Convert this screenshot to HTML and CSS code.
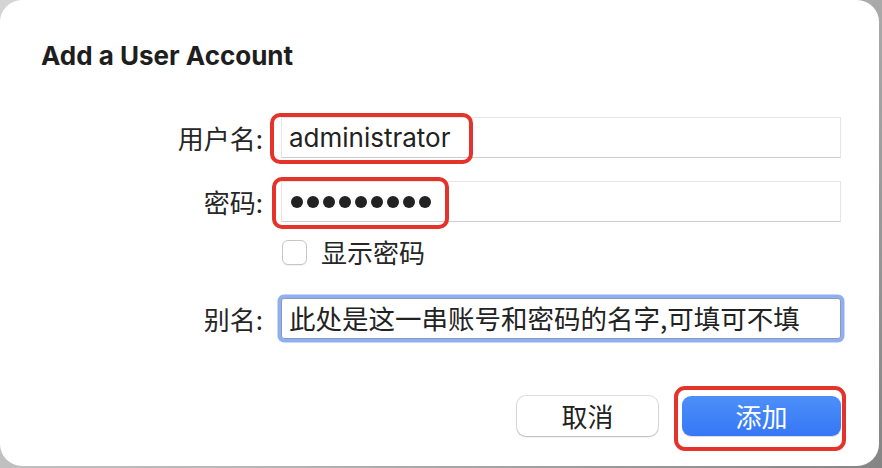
FILE: index.html
```html
<!DOCTYPE html>
<html lang="zh-CN">
<head>
<meta charset="utf-8">
<title>Add a User Account</title>
<link rel="stylesheet" href="styles.css">
</head>
<body>
<div class="dialog">
  <h1 class="title">Add a User Account</h1>
  <div class="form">
    <div class="row row-user">
      <label class="label">用户名:</label>
      <div class="field">
        <span class="value">administrator</span>
        <span class="mark mark-user"></span>
      </div>
    </div>
    <div class="row row-pass">
      <label class="label">密码:</label>
      <div class="field">
        <span class="dots"><i></i><i></i><i></i><i></i><i></i><i></i><i></i><i></i><i></i></span>
        <span class="mark mark-pass"></span>
      </div>
    </div>
    <div class="row row-check">
      <span class="label"></span>
      <div class="check">
        <span class="box"></span>
        <span class="check-text">显示密码</span>
      </div>
    </div>
    <div class="row row-alias">
      <label class="label">别名:</label>
      <div class="field focused">
        <span class="value">此处是这一串账号和密码的名字,可填可不填</span>
      </div>
    </div>
  </div>
  <div class="actions">
    <button class="btn btn-cancel">取消</button>
    <div class="btn-wrap">
      <button class="btn btn-primary">添加</button>
      <span class="mark mark-btn"></span>
    </div>
  </div>
</div>
</body>
</html>
```
FILE: styles.css
```css
html, body {
  margin: 0;
  padding: 0;
}
body {
  width: 882px;
  height: 468px;
  overflow: hidden;
  background: linear-gradient(135deg, #d4d4d4 0%, #b4b4b4 55%, #858585 100%);
  font-family: "Inter", "Noto Sans CJK SC", sans-serif;
  color: #232323;
}
.dialog {
  width: 879px;
  height: 466px;
  box-sizing: border-box;
  background: #fff;
  border-radius: 22px;
  padding: 40px 38px 0 41px;
}
.title {
  margin: 0;
  font-size: 26px;
  line-height: 32px;
  font-weight: 700;
  letter-spacing: 0;
  color: #1e1e1e;
}
.form {
  margin-top: 45px;
  display: flex;
  flex-direction: column;
}
.row {
  display: flex;
  align-items: center;
}
.label {
  width: 222px;
  flex: none;
  text-align: right;
  font-family: "Noto Sans CJK SC", sans-serif;
  font-size: 26px;
  line-height: 41px;
  margin-right: 18px;
  color: #262626;
}
.field {
  position: relative;
  width: 560px;
  height: 41px;
  box-sizing: border-box;
  border: 1px solid #e6e6e6;
  border-bottom-color: #cdcdcd;
  display: flex;
  align-items: center;
  padding-left: 7px;
  background: #fff;
}
.value {
  font-size: 26px;
  line-height: 1;
  color: #222;
  white-space: nowrap;
}
.row-alias .value {
  font-family: "Noto Sans CJK SC", sans-serif;
  font-size: 26.5px;
}
.row-pass {
  margin-top: 23px;
}
.row-check {
  margin-top: 16px;
  height: 28px;
}
.row-check .label {
  line-height: 28px;
}
.row-alias {
  margin-top: 32px;
}
.focused {
  border: 1px solid #8e9ab3;
  box-shadow: 0 0 0 3.5px #8eb0f3;
  border-radius: 3px;
}
.dots {
  display: flex;
  gap: 4px;
  padding-left: 2px;
}
.dots i {
  display: block;
  width: 12px;
  height: 12px;
  border-radius: 50%;
  background: #222;
}
.check {
  display: flex;
  align-items: center;
  gap: 14px;
}
.box {
  display: block;
  width: 25px;
  height: 25px;
  box-sizing: border-box;
  border: 1px solid #c6c6c6;
  border-radius: 6px;
  background: #fff;
  box-shadow: 0 1px 1px rgba(0,0,0,0.06);
  margin-left: 1px;
}
.check-text {
  font-family: "Noto Sans CJK SC", sans-serif;
  font-size: 26px;
  line-height: 28px;
  color: #262626;
}
.mark {
  position: absolute;
  box-sizing: border-box;
  border: 4px solid #e4332b;
  border-radius: 10px;
  pointer-events: none;
}
.mark-user {
  left: -12px;
  top: -5px;
  width: 203px;
  height: 51px;
}
.mark-pass {
  left: -10px;
  top: -5px;
  width: 177px;
  height: 52px;
}
.actions {
  display: flex;
  justify-content: flex-end;
  align-items: center;
  gap: 24px;
  margin-top: 57px;
}
.btn {
  font-family: "Noto Sans CJK SC", sans-serif;
  font-size: 26px;
  height: 40px;
  border: none;
  border-radius: 9px;
  padding: 0;
  line-height: 40px;
  cursor: default;
}
.btn-cancel {
  width: 141px;
  background: #fff;
  color: #222;
  box-shadow: 0 0 0 1px rgba(0,0,0,0.12), 0 1px 2px rgba(0,0,0,0.18);
}
.btn-wrap {
  position: relative;
}
.btn-primary {
  display: block;
  width: 159px;
  color: #fff;
  background: linear-gradient(#4d8ff9, #3677f5);
  box-shadow: 0 1px 1px rgba(0,0,0,0.15);
}
.mark-btn {
  left: -8px;
  top: -10px;
  width: 172px;
  height: 65px;
  border-radius: 11px;
}
```
